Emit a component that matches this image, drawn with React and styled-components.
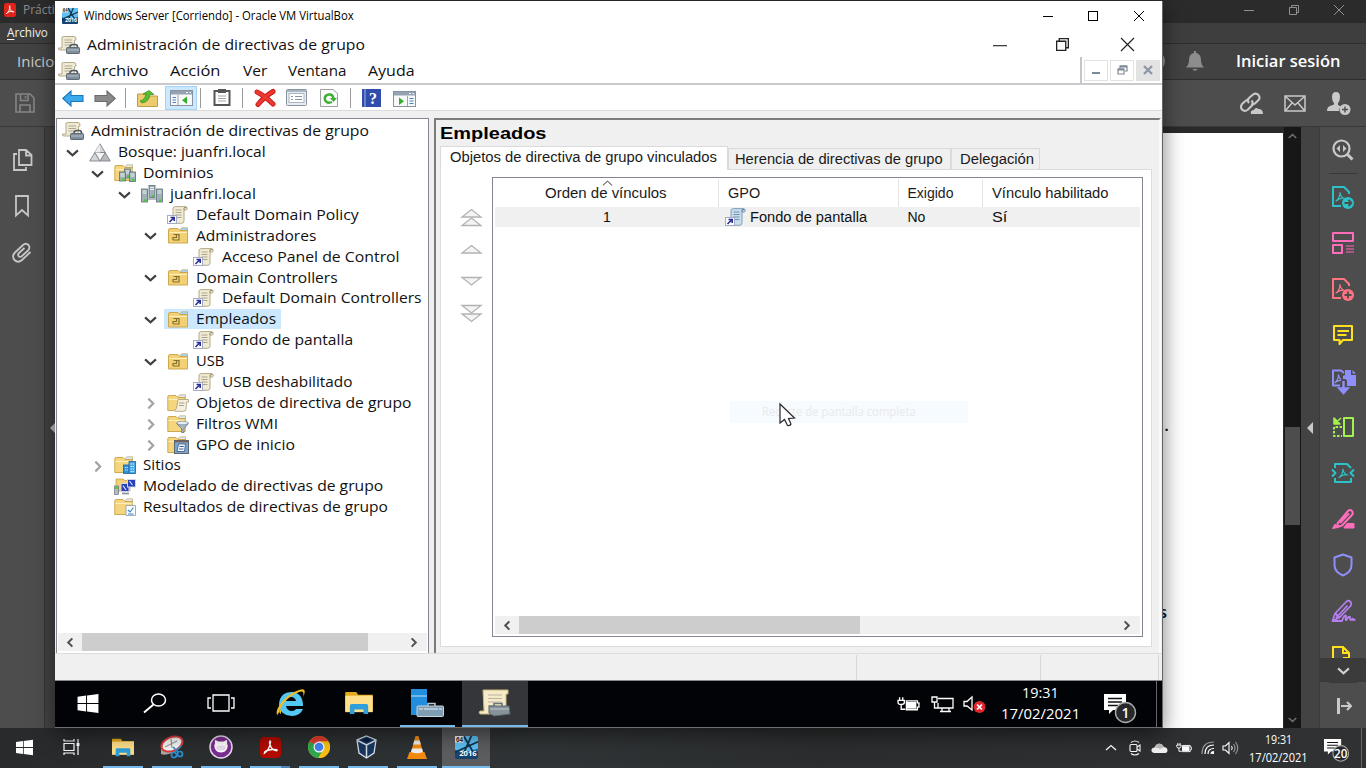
import React, { useLayoutEffect, useRef, useState } from 'react';
import styled, { createGlobalStyle, css } from 'styled-components';

const Global = createGlobalStyle`
  * { box-sizing: border-box; }
  html, body { margin: 0; padding: 0; overflow: hidden; background: #2b2b2b; }
  body { font-family: 'Open Sans', 'Noto Sans', sans-serif; font-size: 12px; }
  svg { display: block; flex: none; overflow: visible; }
`;

const FitBox = styled.span`
  display: inline-block;
  flex: none;
  width: ${(p) => p.$w}px;
  height: ${(p) => p.$lh || 18}px;
  line-height: ${(p) => p.$lh || 18}px;
  font-size: ${(p) => p.$size || 13.6}px;
  color: ${(p) => p.$color || '#111'};
  font-weight: ${(p) => p.$weight || 400};
  white-space: nowrap;
  ${(p) => p.$sans && css`font-family: 'Liberation Sans', Arial, sans-serif;`}
`;
const FitInner = styled.span`
  display: inline-block;
  transform-origin: 0 50%;
`;
function Fit({ w, lh, size, color, weight, sans, children }) {
  const ref = useRef(null);
  const [scale, setScale] = useState(1);
  useLayoutEffect(() => {
    if (ref.current.offsetWidth) setScale(w / ref.current.offsetWidth);
  }, [w, children]);
  return (
    <FitBox $w={w} $lh={lh} $size={size} $color={color} $weight={weight} $sans={sans}>
      <FitInner ref={ref} style={{ transform: `scaleX(${scale})` }}>{children}</FitInner>
    </FitBox>
  );
}

/* ---------- shared pieces ---------- */
const Slot = styled.div`
  flex: none;
  width: ${(p) => p.$w}px;
  height: ${(p) => (p.$h ? p.$h + 'px' : '100%')};
  padding-top: ${(p) => p.$top || 0}px;
  display: flex;
  align-items: center;
  justify-content: center;
`;
const Grow = styled.div`flex: 1;`;

const Minus = ({ s = 10, c = '#000', w = 1 }) => (
  <svg width={s} height={s} viewBox="0 0 10 10"><path d="M0 5.5H10" stroke={c} strokeWidth={w} /></svg>
);
const Cross = ({ s = 10, c = '#000', w = 1 }) => (
  <svg width={s} height={s} viewBox="0 0 10 10"><path d="M0 0L10 10M10 0L0 10" stroke={c} strokeWidth={w} /></svg>
);
const Restore = ({ s = 10, c = '#000', w = 1 }) => (
  <svg width={s} height={s} viewBox="0 0 10 10" fill="none" stroke={c} strokeWidth={w}>
    <path d="M.5 2.5H7.5V9.5H.5ZM2.5 2.5V.5H9.5V7.5H7.5" />
  </svg>
);
const Square = () => (
  <svg width="10" height="10"><rect x=".5" y=".5" width="9" height="9" fill="none" stroke="#000" /></svg>
);
const Chevron = ({ dir = 'down', c = '#404040', s = 12, w = 2 }) => {
  const d = { down: 'M1 4L6 8.5L11 4', up: 'M1 8L6 3.5L11 8', right: 'M4 1.5L8.500 6L4 10.500', left: 'M8 1.500L3.500 6L8 10.500' }[dir];
  return <svg width={s} height={s} viewBox="0 0 12 12"><path d={d} fill="none" stroke={c} strokeWidth={w} /></svg>;
};
const WinLogo = ({ w, h }) => (
  <svg width={w} height={h} viewBox="0 0 22 20" fill="#fff">
    <path d="M0 3L9 1.7V9.5H0ZM10 1.5L22 0V9.5H10ZM0 10.5H9V18.3L0 17ZM10 10.5H22V20L10 18.5Z" />
  </svg>
);

/* ---------- console tree icons ---------- */
const ScrollShape = ({ blue }) => (
  <g>
    <path d="M6 2Q6.500 .6 8.500 .6H18Q20.300 .6 20.300 2.600Q20.300 4.200 18 4.200L17 4V15Q17 17.300 14.500 17.300H6Q4 17.300 4.500 15L6 14Z"
      fill={blue ? '#c9dcea' : '#f1ebd3'} stroke={blue ? '#7897b5' : '#aca180'} strokeWidth=".9" />
    <path d="M8.500 4H14.500M8.500 6.500H14.500M8.500 9H14.500M10 11.500H14.500" stroke={blue ? '#6f93b3' : '#a9a48e'} strokeWidth="1" />
    <path d="M17 4V2Q18 .8 19.500 2" fill="none" stroke={blue ? '#4f6f91' : '#8f8563'} strokeWidth="1" />
  </g>
);
const GpmcIcon = () => (
  <svg width="22" height="18" viewBox="0 0 22 18">
    <path d="M4 1Q5 .5 7 .5H16Q18.500 .5 18 4L16.500 4.500L16 14H2Q0 14 .5 12H4Z" fill="#f1ead3" stroke="#aaa083" strokeWidth=".9" />
    <path d="M6.500 4H14M6.500 6.500H14M6.500 9H12" stroke="#aaa795" />
    <path d="M12 11Q12 8.500 15 8.500H17Q19.500 8.500 19.500 11" fill="none" stroke="#4c5660" strokeWidth="1.600" />
    <rect x="8.500" y="11.500" width="13" height="6" rx=".8" fill="#7e8d99" stroke="#5f6b75" />
    <path d="M9 14H21" stroke="#b8c3cb" />
  </svg>
);
const ForestIcon = () => (
  <svg width="22" height="19" viewBox="0 0 22 19" stroke="#80858a" strokeWidth=".9" fill="#d3d6d8">
    <path d="M11 .8L16.200 9.500H5.800Z" /><path d="M5.800 9.500L11 18H.7Z" /><path d="M16.200 9.500L21.300 18H11Z" fill="#b7babd" />
    <path d="M5.800 9.500H16.200L11 18Z" fill="#f5f5f5" /><path d="M11 .8V9.500L5.800 9.500Z" fill="#eee" stroke="none" />
  </svg>
);
const FolderShape = () => (
  <g>
    <path d="M11 2.500L13 .8H18.500V4H11Z" fill="#dce9f3" stroke="#b39b55" strokeWidth=".6" />
    <path d="M.8 3Q.8 1.500 2 1.500H9L11 3.500H18.200V16.500H.8Z" fill="#f5d67f" stroke="#c8a246" strokeWidth=".9" />
    <path d="M1.500 5.500H17.500" stroke="#fdf0bf" />
  </g>
);
const Server = ({ x, y, h = 10 }) => (
  <g>
    <rect x={x} y={y} width="6" height={h} fill="#9fb0b8" stroke="#5d6d75" strokeWidth=".8" />
    <path d={`M${x + 1} ${y + 2}h4M${x + 1} ${y + 4}h4`} stroke="#e7f0f3" />
    <rect x={x + 2.5} y={y + h - 2.6} width="2.500" height="2" fill="#3fd22d" />
  </g>
);
const DomainsIcon = () => (
  <svg width="22" height="18" viewBox="0 0 22 18"><FolderShape /><Server x={10.5} y={5} h={9} /><Server x={5.5} y={8} h={9} /><Server x={15.5} y={8} h={9.5} /></svg>
);
const DomainIcon = () => (
  <svg width="22" height="18" viewBox="0 0 22 18"><Server x={8} y={.5} h={12} /><Server x={.5} y={4} h={13} /><Server x={15.500} y={4} h={13} /><path d="M7 14H15" stroke="#6b7b83" /></svg>
);
const OuIcon = () => (
  <svg width="22" height="17" viewBox="0 0 22 17">
    <path d="M13 2.500L15 .8H20.500V4H13Z" fill="#a9d3ee" stroke="#b39b55" strokeWidth=".6" />
    <path d="M1.500 3Q1.500 1.500 3 1.500H11L13 3.500H20.500V16H1.500Z" fill="#f3d074" stroke="#c8a246" strokeWidth=".9" />
    <path d="M2.200 5.500H20" stroke="#fdf0bf" /><path d="M6 13H12V7.500H6.500M6 13V10.500H9.500V8" fill="none" stroke="#84702b" strokeWidth="1.200" />
  </svg>
);
const ShortcutArrow = () => (
  <g><rect x=".5" y="9.500" width="9" height="8" fill="#fff" stroke="#a3abc6" /><path d="M2.500 16L7 11.500M3.500 11.500H7.200V15" stroke="#2a2f93" strokeWidth="1.600" fill="none" /></g>
);
const GpoLinkIcon = ({ blue }) => (
  <svg width="22" height="18" viewBox="0 0 22 18"><ScrollShape blue={blue} /><ShortcutArrow /></svg>
);
const FolderScroll = () => (
  <svg width="22" height="18" viewBox="0 0 22 18"><FolderShape /><path d="M11 5.500H21.500V8H19.500L19 15.500Q18.500 17.300 16.500 17.300H8Q6.500 16 9.500 14.500Z" fill="#f6f0dc" stroke="#a69a78" strokeWidth=".8" /><path d="M12 9H17.500M12 11.500H17" stroke="#a9a48e" /></svg>
);
const FolderFilter = () => (
  <svg width="22" height="18" viewBox="0 0 22 18"><FolderShape /><path d="M9.500 8.500H21.500L17 13.500V17.500H14.500V13.500Z" fill="#a8b9c5" stroke="#657784" strokeWidth=".8" /><ellipse cx="15.500" cy="8" rx="5.800" ry="1.800" fill="#e7eef2" stroke="#657784" strokeWidth=".6" /></svg>
);
const FolderStarter = () => (
  <svg width="22" height="18" viewBox="0 0 22 18"><FolderShape /><rect x="7.500" y="4.500" width="14" height="13" fill="#7fa4cf" stroke="#5a6573" /><path d="M8 5.500H21" stroke="#7c5f4d" strokeWidth="1.600" /><path d="M11.500 8H18.500L17.500 15.500H10Z" fill="#f3f7fb" stroke="#34557e" strokeWidth=".8" /><path d="M12.500 10.500H16.800M12 13H16.500" stroke="#38639a" /></svg>
);
const SitesIcon = () => (
  <svg width="22" height="18" viewBox="0 0 22 18"><FolderShape /><rect x="9.500" y="9" width="6" height="8.500" fill="#2f8fd6" stroke="#1763a6" strokeWidth=".8" /><rect x="15" y="5.500" width="6.500" height="12" fill="#48a6e6" stroke="#1763a6" strokeWidth=".8" /><path d="M16.500 8H20M16.500 10.500H20M16.500 13H20M16.500 15.500H20M11 11.500H14M11 14H14" stroke="#d5eefc" strokeWidth="1.200" strokeDasharray="1.400 .7" /></svg>
);
const ModelIcon = () => (
  <svg width="22" height="18" viewBox="0 0 22 18"><path d="M2 2H9L11 3.500H16V14H2Z" fill="#f3d074" stroke="#c8a246" strokeWidth=".8" /><rect x=".6" y="9" width="4" height="8.400" fill="#b7bcc0" stroke="#6d7378" strokeWidth=".7" /><rect x="1.300" y="9.500" width="2.600" height="2.500" fill="#47cc31" /><rect x="7" y="6.500" width="8" height="8" fill="#273fb8" stroke="#d5d9e6" /><path d="M8 16.500H15" stroke="#8e959e" strokeWidth="1.800" /><rect x="13.500" y="2.500" width="8" height="7.500" fill="#273fb8" stroke="#d5d9e6" /><path d="M9 8.500L12 13M15.500 4L18.500 8" stroke="#dce3ff" strokeWidth="1.200" /></svg>
);
const ResultIcon = () => (
  <svg width="22" height="18" viewBox="0 0 22 18"><FolderShape /><path d="M12 7.500H21.500V17.500H12Z" fill="#fbfdff" stroke="#93a3b3" strokeWidth=".9" /><path d="M14 12L16 14L19.500 9.500M14 16H19.500" fill="none" stroke="#3a86c9" strokeWidth="1.100" /></svg>
);

/* ---------- screen and Acrobat window ---------- */
const Screen = styled.div`
  position: relative;
  width: 1366px;
  height: 768px;
  overflow: hidden;
  display: flex;
  flex-direction: column;
  background: #4d4d4d;
`;
const AcroTitle = styled.div`
  height: 23px; flex: none; background: #2b2b2b; display: flex; align-items: center; padding: 0 4px 3px; color: #8b8b8b;
`;
const AcroMenu = styled.div`
  height: 20px; flex: none; background: #3e3e3e; display: flex; align-items: center; padding-left: 7px; color: #f3f3f3;
  u { text-underline-offset: 2px; }
`;
const AcroTabs = styled.div`
  height: 37px; flex: none; background: #424242; border-top: 1px solid #2e2e2e; border-bottom: 1px solid #2e2e2e;
  display: flex; align-items: center; padding: 0 0 1px 17px;
`;
const AcroTools = styled.div`
  height: 47px; flex: none; background: #4d4d4d; border-bottom: 1px solid #383838; display: flex; align-items: center; padding-left: 2px;
`;
const AcroBody = styled.div`height: 601px; flex: none; display: flex;`;
const LeftRail = styled.div`
  width: 45px; flex: none; background: #4d4d4d; border-right: 1px solid #363636; padding: 10px 0 0; display: flex; flex-direction: column;
`;
const Gutter = styled.div`
  width: ${(p) => p.$w}px; flex: none; background: #434343; display: flex; align-items: center; justify-content: ${(p) => (p.$end ? 'flex-end' : 'center')};
`;
const DocArea = styled.div`flex: 1; background: #2a2a2a; padding: 6px 1px 0 0; display: flex;`;
const DocPage = styled.div`
  flex: 1; background: #fff; font-size: 17px; font-weight: 600; display: flex; flex-direction: column; align-items: flex-end;
`;
const DocLine = styled.div`
  height: ${(p) => p.$h}px; line-height: 22px; padding-top: ${(p) => p.$top}px; padding-right: ${(p) => p.$r}px; color: #000c20;
`;
const VScroll = styled.div`
  width: 17px; flex: none; background: #171717; display: flex; flex-direction: column; align-items: center; padding: 5px 0 2px;
`;
const VThumb = styled.div`width: 15px; height: 98px; background: #4d4d4d;`;
const VTrack = styled.div`height: ${(p) => p.$h}px;`;
const RightRail = styled.div`
  width: 47px; flex: none; background: #4d4d4d; border-left: 1px solid #3a3a3a; display: flex; flex-direction: column; align-items: center;
`;
const RailItem = styled.div`
  height: ${(p) => p.$h || 46}px; flex: none; display: flex; align-items: ${(p) => (p.$top ? 'flex-start' : 'center')}; justify-content: center; overflow: hidden;
`;
const RailRule = styled.div`width: 28px; height: 1px; flex: none; background: #383838;`;
const RailMore = styled.div`
  width: 100%; height: 24px; flex: none; background: #3b3b3b; display: flex; align-items: center; justify-content: center;
`;

const AcroLogo = ({ w = 12, h = 14, bg = '#e0241b' }) => (
  <svg width={w} height={h} viewBox="0 0 24 26" preserveAspectRatio="none"><rect width="24" height="26" rx="5" fill={bg} /><path d="M5 20C8 18 12 12 12 6C12 4 10.500 5 11 8C12 13 15 17 19 17C21 16 18 15 14 15.500C9 16 5 18 5 20Z" fill="none" stroke="#fff" strokeWidth="1.700" /></svg>
);
const PdfTri = ({ x = 0, y = 0 }) => (
  <path transform={`translate(${x} ${y})`} d="M1 10C3 8.500 5 5 5 1.500C5 4.500 7.500 7.500 10 7.500C6.500 6.500 3.500 8 1 10Z" fill="none" strokeWidth="1.200" />
);
const stroke2 = { fill: 'none', strokeWidth: 2, strokeLinejoin: 'round' };
const ExportPdf = ({ c, plus }) => (
  <svg width="24" height="24" viewBox="0 0 24 24" stroke={c} {...stroke2}>
    <path d="M10 21H2V2H13L18 7V9" /><PdfTri x={4} y={6} />
    <circle cx="17" cy="18" r="6" fill={c} stroke="none" />
    <path d={plus ? 'M17 14.500V21.500M13.500 18H20.500' : 'M13.500 18H20M17.500 15L20.500 18L17.500 21'} stroke="#4d4d4d" strokeWidth="1.800" />
  </svg>
);
const RAIL_ICONS = [
  <ExportPdf key="export" c="#2dc1c9" />,
  <svg key="organize" width="24" height="24" viewBox="0 0 24 24" stroke="#ff6dbb" {...stroke2}><rect x="2" y="2" width="20" height="8" /><rect x="2" y="14" width="9" height="8" /><path d="M15 15H23M15 18H23M15 21H23" strokeWidth="1.200" /></svg>,
  <ExportPdf key="create" c="#ff7480" plus />,
  <svg key="comment" width="22" height="22" viewBox="0 0 22 22" stroke="#ffe11f" {...stroke2}><path d="M2 2H20V16H11L7.500 20V16H2Z" /><path d="M5.500 7H17M5.500 11H14.500" /></svg>,
  <svg key="combine" width="25" height="25" viewBox="0 0 25 25"><path d="M9 16.500H2V1.500H10L13 4" stroke="#8f8ffc" {...stroke2} /><g stroke="#8f8ffc"><PdfTri x={2.500} y={4} /></g><path d="M14 1H20V6H25V17H16V11H12V7L14 6ZM21.500 1L25 4.500H21.500Z" fill="#8f8ffc" /><path d="M12.500 10V18" stroke="#4d4d4d" strokeWidth="5" /><path d="M12.500 12V20M8.500 19.500L12.500 24L16.500 19.500Z" stroke="#8f8ffc" strokeWidth="2.400" fill="#8f8ffc" /></svg>,
  <svg key="compare" width="22" height="22" viewBox="0 0 22 22" stroke="#a4f24d" {...stroke2}><rect x="12" y="2" width="9" height="18" /><path d="M10 11H2V20H10" strokeDasharray="2.500 1.500" /><path d="M9 2L4 6.500M2 2V8H8Z" fill="#a4f24d" strokeWidth="1.500" /></svg>,
  <svg key="compress" width="24" height="22" viewBox="0 0 24 22" stroke="#2dc1c9" {...stroke2}><path d="M4 6V2H16L20 6M4 16V20H20V16" /><path d="M1 7.500L4.500 11L1 14.500M23 7.500L19.500 11L23 14.500" /><PdfTri x={7} y={5.500} /></svg>,
  <svg key="redact" width="23" height="22" viewBox="0 0 23 22" stroke="#ff6dbb" {...stroke2}><path d="M5.500 15.500L16 3Q18 1 20 3Q21.500 5 20 7L10 17.500L5.500 19ZM8 15L17 5.500" /><path d="M.5 20.500L3 16L6 19.500ZM12 19.500L15 15.500H22V20H12Z" fill="#ff6dbb" strokeWidth="1" /></svg>,
  <svg key="protect" width="20" height="24" viewBox="0 0 20 24" stroke="#8f8ffc" {...stroke2}><path d="M10 1.500L18.500 4.500V12Q18.500 19 10 22.500Q1.500 19 1.500 12V4.500Z" /></svg>,
  <svg key="sign" width="25" height="24" viewBox="0 0 25 24" stroke="#b57ff0" {...stroke2}><path d="M1.500 22L4 14.500L15.500 2.500Q18 .5 20 3.500Q21 5 19.500 7L8.500 18.500L1.500 22H11Q13 16 15 16.500Q14 22 15.500 21Q17.500 16.500 19 18Q18.500 22 21 20.500Q21.500 18.500 22 21L24.500 20.500M4.500 14.500L8 18M5 19L16.500 6.500" strokeWidth="1.800" /></svg>,
];

function AcrobatWindow() {
  return (
    <>
      <AcroTitle>
        <AcroLogo w={12} h={14} />
        <Slot $w={7} />
        <Fit w={32} size={12} color="#8b8b8b">Prácti</Fit>
        <Grow />
        <Slot $w={45}><Minus c="#909090" /></Slot>
        <Slot $w={45}><Restore c="#909090" /></Slot>
        <Slot $w={46}><Cross c="#909090" /></Slot>
      </AcroTitle>
      <AcroMenu><Fit w={41} size={12} color="#f5f5f5"><u>A</u>rchivo</Fit></AcroMenu>
      <AcroTabs>
        <Fit w={37} size={15} lh={22} color="#c9c9c9">Inicio</Fit>
        <Grow />
        <Slot $w={30}><svg width="20" height="20"><circle cx="10" cy="10" r="9" fill="none" stroke="#999" strokeWidth="2" /></svg></Slot>
        <Slot $w={50}>
          <svg width="18" height="20" viewBox="0 0 18 20" fill="#8d8d8d"><path d="M8 0H10V2Q15 3 15 9Q15 14 18 16.500H0Q3 14 3 9Q3 3 8 2ZM6 18H12L9 20Z" /></svg>
        </Slot>
        <Slot $w={16} />
        <Fit w={104} size={16} lh={22} color="#fff" weight={600}>Iniciar sesión</Fit>
        <Slot $w={26} />
      </AcroTabs>
      <AcroTools>
        <Slot $w={46}>
          <svg width="20" height="20" viewBox="0 0 20 20" fill="none" stroke="#858585" strokeWidth="1.600"><path d="M1 1H15L19 5V19H1ZM5.500 1V7.500H13V1M5 19V12H15V19M10.500 3V5.500" /></svg>
        </Slot>
        <Grow />
        <Slot $w={44}>
          <svg width="25" height="23" viewBox="0 0 25 23" fill="none" stroke="#c9c9c9" strokeWidth="2.100"><path d="M10 11Q7.500 8.500 10 6L14 2.500Q17 .5 19.500 3Q21.500 6 19.500 8L16 11.500Q14 13 12 12.500M12.500 8.500Q15 11.500 12.500 14L8.500 18Q5.500 20 3 17.500Q1 15 3 12L7 8.500Q8.500 7.500 10 8" /><path d="M12 22Q11 18 15 18Q16.500 14.500 19.500 17Q24 17 24 22Z" fill="#c9c9c9" stroke="none" /></svg>
        </Slot>
        <Slot $w={44}>
          <svg width="22" height="17" viewBox="0 0 22 17" fill="none" stroke="#c9c9c9" strokeWidth="1.500"><path d="M1 1H21V16H1ZM2 2L11 10L20 2M2 15L8 8M20 15L14 8" /></svg>
        </Slot>
        <Slot $w={44}>
          <svg width="24" height="23" viewBox="0 0 24 23" fill="#c9c9c9"><path d="M5 5Q5 0 9 0T13 5Q13 9 11 11V13L14 14.500Q11.500 16.500 12 19H0Q0 15 3 14L7 12.500V11Q5 9 5 5Z" /><circle cx="18" cy="17.500" r="5.500" /><path d="M18 14.500V20.500M15 17.500H21" stroke="#4d4d4d" strokeWidth="1.400" /></svg>
        </Slot>
        <Slot $w={5} />
      </AcroTools>
      <AcroBody>
        <LeftRail>
          <Slot $w={45} $h={46}><svg width="20" height="22" viewBox="0 0 20 22" fill="none" stroke="#c6c6c6" strokeWidth="1.800"><path d="M6 1H13L18.500 6V16H6ZM13 1V6.500H18.500M4 5H1V21H13V18" /></svg></Slot>
          <Slot $w={43} $h={46}><svg width="14" height="22" viewBox="0 0 14 22" fill="none" stroke="#c6c6c6" strokeWidth="1.800"><path d="M1 1H13V20.500L7 15L1 20.500Z" /></svg></Slot>
          <Slot $w={43} $h={46}><svg width="20" height="21" viewBox="0 0 20 21" fill="none" stroke="#c6c6c6" strokeWidth="1.800"><path d="M18.500 10L10 18Q6 21.500 2.500 18Q-.5 14 3 10.500L11 3Q14 .5 16.500 3Q18.500 6 16 8.500L9.500 14.500Q7.500 15.500 6.500 14Q5.500 12.500 7 11L12.500 6" /></svg></Slot>
        </LeftRail>
        <Gutter $w={10} $end><svg width="5" height="10"><path d="M5 0V10L0 5Z" fill="#bbb" /></svg></Gutter>
        <DocArea>
          <DocPage>
            <DocLine $top={281} $h={466} $r={114}>.</DocLine>
            <DocLine $top={2} $h={30} $r={116}>s</DocLine>
          </DocPage>
        </DocArea>
        <VScroll>
          <Chevron dir="up" c="#6e6e6e" s={9} w={2} />
          <VTrack $h={286} />
          <VThumb />
          <VTrack $h={190} />
          <Chevron c="#6e6e6e" s={9} w={2} />
        </VScroll>
        <Gutter $w={18}><svg width="6" height="12"><path d="M6 0V12L0 6Z" fill="#c9c9c9" /></svg></Gutter>
        <RightRail>
          <RailItem>
            <svg width="22" height="22" viewBox="0 0 22 22" fill="none" stroke="#c9c9c9" strokeWidth="2.200"><circle cx="9.500" cy="9.500" r="8" /><path d="M15 15L20.500 20.500" strokeWidth="3" /><path d="M8 6L4.500 9.500L8 13ZM11 6L14.500 9.500L11 13Z" fill="#c9c9c9" stroke="none" /></svg>
          </RailItem>
          <RailRule />
          {RAIL_ICONS.map((icon, i) => <RailItem key={i}>{icon}</RailItem>)}
          <RailItem $h={24} $top>
            <svg width="22" height="34" viewBox="0 -12 22 34" fill="none" stroke="#ffe11f" strokeWidth="2"><path d="M9 14H1V1H11L17 7V12H11M11 1V7H17" /></svg>
          </RailItem>
          <RailMore><Chevron c="#d0d0d0" s={13} w={2} /></RailMore>
          <RailRule />
          <RailItem $h={46}>
            <svg width="18" height="16" viewBox="0 0 18 16" fill="none" stroke="#c9c9c9" strokeWidth="2"><path d="M4.500 0V16" strokeWidth="3" /><path d="M7 8H17M13 4L17 8L13 12" /></svg>
          </RailItem>
        </RightRail>
      </AcroBody>
    </>
  );
}

/* ---------- VirtualBox window ---------- */
const VmWindow = styled.section`
  position: absolute;
  left: 55px;
  top: 1px;
  width: 1108px;
  height: 727px;
  background: #fff;
  border-right: 1px solid #656565;
  border-bottom: 1px solid #6d6d6d;
  box-shadow: 0 6px 20px rgba(0, 0, 0, 0.5);
  display: flex;
  flex-direction: column;
`;
const VmTitle = styled.header`height: 30px; flex: none; display: flex; align-items: center; padding-left: 7px;`;
const MmcTitle = styled.div`height: 26px; flex: none; display: flex; align-items: center; padding: 1px 0 0 3px;`;
const MmcMenu = styled.div`height: 28px; flex: none; display: flex; align-items: flex-start; padding-left: 3px; border-bottom: 2px solid #c9cace;`;
const MenuSlot = styled.div`flex: none; display: flex; align-items: center; height: 27px; margin-right: ${(p) => p.$gap}px;`;
const MdiGroup = styled.div`
  height: 26px; width: 82px; border-left: 2px solid #c3c5ca; display: flex; align-items: center; gap: 2px; padding-left: 2px;
`;
const MdiButton = styled.div`
  width: 24px; height: 21px; flex: none; border: 1px solid #e2e2e2; background: ${(p) => (p.$shade ? '#e3e3e3' : '#fff')};
  display: flex; align-items: center; justify-content: center;
`;
const MmcTools = styled.div`
  height: 25px; flex: none; display: flex; align-items: center; padding-left: 2px;
`;
const ToolActive = styled.div`
  width: 32px; height: 24px; background: #cce8ff; border: 1px solid #a5d3f5; display: flex; align-items: center; justify-content: center;
`;
const ToolSep = styled.div`width: 1px; height: 20px; background: #9a9a9a;`;
const MmcBody = styled.div`
  height: 543px; flex: none; background: #f0f0f0; border-top: 1px solid #dcdcdc; padding: 7px 1px 0 1px; display: flex; gap: 5px;
`;
const TreePane = styled.div`
  width: 373px; height: 536px; flex: none; background: #fff; border: 1px solid #828790; display: flex; flex-direction: column; padding: 2px 0 0;
`;
const TreeList = styled.div`flex: 1; overflow: hidden;`;
const TreeRow = styled.div`
  height: 20.88px; display: flex; align-items: center; padding-left: ${(p) => (p.$level ? 26.35 * p.$level - 27.3 : 5)}px;
`;
const Twisty = styled.div`width: 32px; flex: none; display: flex; justify-content: center; padding: ${(p) => (p.$right ? 2 : 0)}px 1px 0 0;`;
const TreeLabel = styled.div`
  display: flex; align-items: center; gap: 7px; height: 20px; padding: 0 5px 0 3px; margin-left: -3px;
  background: ${(p) => (p.$on ? '#cce8ff' : 'transparent')};
`;
const HScroll = styled.div`
  height: 18px; flex: none; background: #f0f0f0; display: flex; align-items: center;
  margin: ${(p) => p.$m}; padding: 0 8px 0 ${(p) => p.$pl}px;
`;
const HThumb = styled.div`height: 18px; width: ${(p) => p.$w}px; background: #cdcdcd; margin: 0 auto 0 6px;`;

const DetailPane = styled.div`
  width: 727px; height: 536px; flex: none; background: #f0f0f0; border-left: 2px solid #7c7c7c; border-top: 2px solid #7c7c7c;
  border-right: 2px solid #fafafa; border-bottom: 1px solid #fafafa; padding: 3px 7px 6px 4px; display: flex; flex-direction: column;
`;
const DetailTitle = styled.div`height: 22px; flex: none; display: flex; align-items: center; padding-bottom: 1px;`;
const TabStrip = styled.div`height: 24px; flex: none; display: flex; align-items: flex-end;`;
const Tab = styled.div`
  width: ${(p) => p.$w}px; height: ${(p) => (p.$on ? 24 : 21)}px; flex: none; display: flex; align-items: center;
  padding: 0 0 ${(p) => (p.$on ? 3 : 0)}px ${(p) => p.$pl}px;
  background: ${(p) => (p.$on ? '#fff' : '#f0f0f0')}; border: 1px solid #dadada; border-bottom: 0;
  ${(p) => p.$on && css`margin-bottom: -1px; z-index: 1;`}
`;
const TabPage = styled.div`
  flex: 1; background: #fff; border: 1px solid #dcdcdc; padding: 7px 8px 9px 6px; display: flex; gap: 0;
`;
const OrderButtons = styled.div`width: 45px; flex: none; display: flex; flex-direction: column; align-items: center; padding: 25px 0 0 4px;`;
const OrderButton = styled.div`height: 32px; display: flex; align-items: center;`;
const ListView = styled.div`
  flex: 1; border: 1px solid #828790; display: flex; flex-direction: column; padding: 1px 1px 2px 1px;
`;
const ListHeader = styled.div`height: 28px; flex: none; display: flex;`;
const HeadCell = styled.div`
  position: relative; width: ${(p) => p.$w}px; flex: none; border-right: ${(p) => (p.$last ? 0 : '1px solid #e3e3e3')};
  display: flex; align-items: center; justify-content: ${(p) => (p.$center ? 'center' : 'flex-start')}; padding-left: ${(p) => (p.$center ? 0 : 8.5)}px;
`;
const SortMark = styled.div`position: absolute; top: -1px; left: 108px;`;
const ListRow = styled.div`height: 20px; flex: none; background: #f0f0f0; display: flex; margin: 0 1px;`;
const Cell = styled.div`
  width: ${(p) => p.$w}px; flex: none; display: flex; align-items: center; gap: 3px;
  justify-content: ${(p) => (p.$center ? 'center' : 'flex-start')}; padding-left: ${(p) => p.$pad || 0}px;
`;
const StatusBar = styled.div`
  height: 27px; flex: none; background: #f0f0f0; border-top: 1px solid #dcdcdc; display: flex; justify-content: flex-end; padding: 1px 1px 0;
`;
const StatusCell = styled.div`width: ${(p) => p.$w}px; border-left: 1px solid #d8d8d8;`;
const GuestBar = styled.div`
  height: 47px; flex: none; background: #020306; border-top: 1px solid #888; display: flex; align-items: stretch;
`;
const GuestApp = styled.div`
  width: ${(p) => p.$w}px; flex: none; display: flex; align-items: center; justify-content: center;
  background: ${(p) => (p.$on ? '#34363a' : 'transparent')};
  border-bottom: ${(p) => (p.$run ? '2px solid #76b9ed' : '2px solid transparent')};
  margin-right: ${(p) => p.$gap || 0}px;
`;
const Clock = styled.div`
  width: ${(p) => p.$w}px; flex: none; display: flex; flex-direction: column; align-items: center; justify-content: center; padding-bottom: ${(p) => p.$pb || 0}px;
`;
const ShowDesktop = styled.div`width: ${(p) => p.$w}px; border-left: 1px solid #666;`;

const TREE = [
  [0, '', <GpmcIcon />, 'Administración de directivas de grupo', 278],
  [1, 'down', <ForestIcon />, 'Bosque: juanfri.local', 148],
  [2, 'down', <DomainsIcon />, 'Dominios', 70],
  [3, 'down', <DomainIcon />, 'juanfri.local', 86],
  [4, '', <GpoLinkIcon />, 'Default Domain Policy', 163],
  [4, 'down', <OuIcon />, 'Administradores', 120],
  [5, '', <GpoLinkIcon />, 'Acceso Panel de Control', 178],
  [4, 'down', <OuIcon />, 'Domain Controllers', 142],
  [5, '', <GpoLinkIcon />, 'Default Domain Controllers', 199],
  [4, 'down', <OuIcon />, 'Empleados', 80, true],
  [5, '', <GpoLinkIcon />, 'Fondo de pantalla', 131],
  [4, 'down', <OuIcon />, 'USB', 28],
  [5, '', <GpoLinkIcon />, 'USB deshabilitado', 131],
  [4, 'right', <FolderScroll />, 'Objetos de directiva de grupo', 215],
  [4, 'right', <FolderFilter />, 'Filtros WMI', 82],
  [4, 'right', <FolderStarter />, 'GPO de inicio', 99],
  [2, 'right', <SitesIcon />, 'Sitios', 38],
  [2, '', <ModelIcon />, 'Modelado de directivas de grupo', 240],
  [2, '', <ResultIcon />, 'Resultados de directivas de grupo', 245],
];

const Tri = ({ up, double }) => {
  const one = (y) => <path d={up ? `M1 ${y + 7.5}H20L10.500 ${y}Z` : `M1 ${y}H20L10.500 ${y + 7.5}Z`} />;
  return (
    <svg width="21" height={double ? 18 : 10} viewBox={`0 -.5 21 ${double ? 18 : 10}`} fill="#f4f4f4" stroke="#b2b2b2" strokeWidth="1.300">
      {one(0)}{double && one(8.500)}
    </svg>
  );
};
const ArrowIcon = ({ c, edge, flip }) => (
  <svg width="22" height="17" viewBox="0 0 22 17">
    <path transform={flip ? 'matrix(-1 0 0 1 22 0)' : undefined} d="M.8 8.500L9 1V5.500H21V11.500H9V16Z" fill={c} stroke={edge} strokeWidth="1.100" />
  </svg>
);
const ConsolePanel = ({ left, play }) => (
  <svg width="23" height="16" viewBox="0 0 23 16">
    <rect x=".5" y=".5" width="22" height="15" fill="#f7f8f9" stroke="#8793a0" /><rect x="1" y="1" width="21" height="3.500" fill="#94a2b1" />
    <path d="M16 2.500H18M19.500 2.500H21" stroke="#fff" />
    <path d={left ? 'M8 5V15' : 'M14.500 5V15'} stroke="#9aa4ae" />
    <path d={left ? 'M2.500 7.500H6M2.500 10H6M2.500 12.500H6' : 'M16.500 7.500H20.500M16.500 10H20.500M16.500 12.500H20.500'} stroke="#4e84bd" strokeWidth="1.200" />
    <path d={play ? 'M6 6.500V14L11 10.200Z' : 'M17 6.500V14L12 10.200Z'} fill="#31ae2a" />
  </svg>
);
const Os2016 = ({ s }) => (
  <svg width={s} height={s} viewBox="0 0 24 24">
    <rect width="24" height="24" rx="2" fill="#1d6cb3" /><path d="M9 0H22Q24 0 24 2V13L9 18L0 14V7H9Z" fill="#5dc1f2" />
    <path d="M0 17L24 6M9 0L21 20M17 0L10 16" stroke="#15324f" strokeWidth="1.900" /><path d="M0 16H24V22Q24 24 22 24H2Q0 24 0 22Z" fill="#152e4d" opacity=".65" />
    <rect width="9" height="7" fill="#f3f3f3" /><text x="1" y="6" fontSize="6.500" fontWeight="700" fill="#333" fontFamily="Open Sans">64</text>
    <text x="4.500" y="20.500" fontSize="8" fontWeight="700" fill="#fff" fontFamily="Open Sans" textLength="18">2016</text>
  </svg>
);
const FolderApp = ({ w, h }) => (
  <svg width={w} height={h} viewBox="0 0 30 24"><path d="M0 1Q0 0 1 0H12L14 3H30V21H0Z" fill="#e5a91c" /><rect y="4" width="30" height="18" fill="#ffe08a" /><path d="M5 24V15Q5 13 7 13H23Q25 13 25 15V24H20V19H10V24Z" fill="#2f9fdc" /></svg>
);
const PlugBattery = ({ w = 22, h = 14 }) => (
  <svg width={w} height={h} viewBox="0 0 22 14" fill="none" stroke="#fff" strokeWidth="1.300"><path d="M1 3H7V5Q7 7 4 7Q1 7 1 5ZM2.500 0V3M5.500 0V3M4 7V11.500H8" /><path d="M9 3.500H19.500V5.500H21V9.500H19.500V12H9Z" /><rect x="9" y="4.500" width="9.500" height="6.500" fill="#fff" stroke="none" /></svg>
);
const Notice = ({ s = 1, n, light, fs }) => (
  <svg width={33 * s} height={29 * s} viewBox="0 0 33 29">
    <path d="M0 0H22V16H9L5 20V16H0Z" fill="#fff" /><path d="M4 4.500H18M4 8H18M4 11.500H14" stroke="#111" strokeWidth="1.500" />
    <circle cx="21.500" cy="18.500" r="10" fill="#26282a" stroke={light} strokeWidth="1.400" />
    <text x="21.500" y={18.500 + fs * .36} textAnchor="middle" fontSize={fs} fontWeight="600" fill="#fff" fontFamily="Open Sans">{n}</text>
  </svg>
);
const GhostMenu = styled.div`
  position: absolute; left: 675px; top: 400px; width: 238px; height: 22px; background: #f5fbfe; display: flex; align-items: center; padding-left: 32px;
`;
const Pointer = styled.div`position: absolute; left: 724px; top: 402px;`;

function Snapin() {
  return (
    <MmcBody>
      <TreePane>
        <TreeList>
          {TREE.map(([level, open, icon, text, w, on]) => (
            <TreeRow key={text} $level={level}>
              {level > 0 && <Twisty $right={open === 'right'}>{open && <Chevron dir={open} s={13} c={open === 'down' ? '#404040' : '#a3a3a3'} />}</Twisty>}
              <TreeLabel $on={on}>{icon}<Fit w={w}>{text}</Fit></TreeLabel>
            </TreeRow>
          ))}
        </TreeList>
        <HScroll $m="0 1px 2px" $pl={7}><Chevron dir="left" c="#505050" s={11} w={2.200} /><HThumb $w={286} /><Chevron dir="right" c="#505050" s={11} w={2.200} /></HScroll>
      </TreePane>
      <DetailPane>
        <DetailTitle><Fit w={106} size={16} weight={700} color="#000" sans>Empleados</Fit></DetailTitle>
        <TabStrip>
          <Tab $w={288} $pl={9} $on><Fit w={267} size={14} color="#1a1a1a" sans>Objetos de directiva de grupo vinculados</Fit></Tab>
          <Tab $w={223} $pl={6}><Fit w={208} size={14} color="#1a1a1a" sans>Herencia de directivas de grupo</Fit></Tab>
          <Tab $w={89} $pl={8}><Fit w={74} size={14} color="#1a1a1a" sans>Delegación</Fit></Tab>
        </TabStrip>
        <TabPage>
          <OrderButtons>
            <OrderButton><Tri up double /></OrderButton>
            <OrderButton><Tri up /></OrderButton>
            <OrderButton><Tri /></OrderButton>
            <OrderButton><Tri double /></OrderButton>
          </OrderButtons>
          <ListView>
            <ListHeader>
              <HeadCell $w={225} $center>
                <SortMark><Chevron dir="up" c="#666" s={11} w={1.200} /></SortMark>
                <Fit w={122} size={14} color="#1a1a1a" sans>Orden de vínculos</Fit>
              </HeadCell>
              <HeadCell $w={180}><Fit w={32} size={14} color="#1a1a1a" sans>GPO</Fit></HeadCell>
              <HeadCell $w={84}><Fit w={46} size={14} color="#1a1a1a" sans>Exigido</Fit></HeadCell>
              <HeadCell $w={157} $last><Fit w={117} size={14} color="#1a1a1a" sans>Vínculo habilitado</Fit></HeadCell>
            </ListHeader>
            <ListRow>
              <Cell $w={224} $center><Fit w={8} size={14} sans>1</Fit></Cell>
              <Cell $w={180} $pad={5.500}><GpoLinkIcon blue /><Fit w={117} size={14} sans>Fondo de pantalla</Fit></Cell>
              <Cell $w={84} $pad={8.500}><Fit w={18} size={14} sans>No</Fit></Cell>
              <Cell $w={150} $pad={8.500}><Fit w={15} size={14} sans>Sí</Fit></Cell>
            </ListRow>
            <Grow />
            <HScroll $m="0 1px" $pl={7}><Chevron dir="left" c="#505050" s={11} w={2.200} /><HThumb $w={341} /><Chevron dir="right" c="#505050" s={11} w={2.200} /></HScroll>
          </ListView>
        </TabPage>
      </DetailPane>
    </MmcBody>
  );
}

function GuestTaskbar() {
  return (
    <GuestBar>
      <GuestApp $w={66}><WinLogo w={22} h={19} /></GuestApp>
      <GuestApp $w={67}><svg width="24" height="20" viewBox="0 0 24 20" fill="none" stroke="#fff" strokeWidth="1.500"><ellipse cx="15.500" cy="7" rx="7" ry="6" /><path d="M10.500 11.500L1 19.500" strokeWidth="1.900" /></svg></GuestApp>
      <GuestApp $w={66}><svg width="28" height="18" viewBox="0 0 28 18" fill="none" stroke="#fff" strokeWidth="1.300"><path d="M6 1H22V17H6ZM4 4H1V14H4M24 4H27V14H24" /></svg></GuestApp>
      <GuestApp $w={74}>
        <svg width="32" height="28" viewBox="0 0 32 28"><path d="M28 17H11Q12 22 17 22Q20 22 21 20H28Q25 27 17 27Q4 26 4 15Q5 3 17 3Q28 4 28 17ZM11 12H21Q20 8 16 8Q12 8 11 12Z" fill="#54c8f4" /><path d="M6 20Q1 28 3 26Q-1 24 6 14Q14 4 24 1Q33 -2 28 8Q30 1 24 3Q14 7 8 15Q2 24 6 25Z" fill="#f2bd24" /></svg>
      </GuestApp>
      <GuestApp $w={61} $gap={11}><FolderApp w={30} h={22} /></GuestApp>
      <GuestApp $w={55} $gap={7} $run>
        <svg width="33" height="28" viewBox="0 0 33 28"><path d="M0 0H16V26H0Z" fill="#218ede" /><path d="M0 7H16" stroke="#bfe3fa" /><path d="M17 17V14.500H24V17" fill="none" stroke="#b8c7d2" strokeWidth="1.500" /><rect x="6" y="17" width="26.500" height="10.500" rx="1" fill="#7f9db3" stroke="#c7d5de" /><path d="M8 20H12M13 20H27M28 20H31" stroke="#e8f0f4" /></svg>
      </GuestApp>
      <GuestApp $w={66} $run $on>
        <svg width="33" height="28" viewBox="0 0 33 28"><path d="M4 1H29V5H27V25H2Q-1 25 1 22H5Z" fill="#f5ebc9" stroke="#c9b67a" /><path d="M9 6H23M9 9.500H23M9 13H23M9 16.500H16" stroke="#b9b39c" /><path d="M15 17V14.500H23V17" fill="none" stroke="#68737c" strokeWidth="1.600" /><path d="M10 17H30L31 25L15 27L10 24Z" fill="#87939b" stroke="#5b666e" /><path d="M11 20H30" stroke="#bbc5cb" /></svg>
      </GuestApp>
      <Grow />
      <Slot $w={36}><PlugBattery w={23} h={15} /></Slot>
      <Slot $w={32}><svg width="23" height="17" viewBox="0 0 23 17" fill="none" stroke="#fff" strokeWidth="1.300"><path d="M7 2.500H22V12H7V7M11 12V15.500M18 12V15.500M9 15.500H20M1 1H6V6H1ZM3.500 6V12H7" /></svg></Slot>
      <Slot $w={32}><svg width="23" height="17" viewBox="0 0 23 17"><path d="M1 5.500H4L9 1V14L4 10H1Z" fill="none" stroke="#fff" strokeWidth="1.300" /><circle cx="16.500" cy="11" r="6" fill="#e1262d" /><path d="M14 8.500L19 13.500M19 8.500L14 13.500" stroke="#fff" strokeWidth="1.700" /></svg></Slot>
      <Slot $w={6} />
      <Clock $w={88} $pb={3}><Fit w={37} size={13.600} lh={21} color="#fff">19:31</Fit><Fit w={79} size={13.600} lh={21} color="#fff">17/02/2021</Fit></Clock>
      <Slot $w={72} $top={8}><Notice n="1" light="#aaa" fs={14} /></Slot>
      <ShowDesktop $w={6} />
    </GuestBar>
  );
}

function VirtualMachine() {
  return (
    <VmWindow>
      <VmTitle>
        <Os2016 s={16} />
        <Slot $w={6} />
        <Fit w={270} size={12} color="#000">Windows Server [Corriendo] - Oracle VM VirtualBox</Fit>
        <Grow />
        <Slot $w={45}><Minus /></Slot>
        <Slot $w={46}><Square /></Slot>
        <Slot $w={46}><Cross /></Slot>
      </VmTitle>
      <MmcTitle>
        <GpmcIcon />
        <Slot $w={7} />
        <Fit w={278}>Administración de directivas de grupo</Fit>
        <Grow />
        <Slot $w={62}><Minus s={14} w={.8} c="#222" /></Slot>
        <Slot $w={62}><Restore s={13} c="#222" /></Slot>
        <Slot $w={69}><Cross s={13} w={.9} c="#222" /></Slot>
      </MmcTitle>
      <MmcMenu>
        <MenuSlot $gap={11}><GpmcIcon /></MenuSlot>
        <MenuSlot $gap={22}><Fit w={57}>Archivo</Fit></MenuSlot>
        <MenuSlot $gap={22}><Fit w={51}>Acción</Fit></MenuSlot>
        <MenuSlot $gap={21}><Fit w={24}>Ver</Fit></MenuSlot>
        <MenuSlot $gap={22}><Fit w={58}>Ventana</Fit></MenuSlot>
        <MenuSlot $gap={0}><Fit w={47}>Ayuda</Fit></MenuSlot>
        <Grow />
        <MdiGroup>
          <MdiButton><svg width="8" height="10"><path d="M0 8H8" stroke="#7b8896" strokeWidth="2" /></svg></MdiButton>
          <MdiButton><svg width="11" height="10" viewBox="0 0 11 10" fill="none" stroke="#7b8896" strokeWidth="1.200"><path d="M1 4H7V9H1ZM3 3V1H10V6H8" /><path d="M1 4.500H7M3 1.500H10" strokeWidth="2" /></svg></MdiButton>
          <MdiButton $shade><Cross s={8} c="#8c98a4" w={3} /></MdiButton>
        </MdiGroup>
      </MmcMenu>
      <MmcTools>
        <Slot $w={32} $top={1}><ArrowIcon c="#39a9ec" edge="#1c77bb" /></Slot>
        <Slot $w={31} $top={1}><ArrowIcon c="#8a8a8a" edge="#6c6c6c" flip /></Slot>
        <Slot $w={10}><ToolSep /></Slot>
        <Slot $w={35} $top={2}>
          <svg width="21" height="17" viewBox="0 0 21 17"><path d="M.5 4H8L10 6H20.500V16.500H.5Z" fill="#efcb70" stroke="#c29c42" /><path d="M3 11Q8 10 9 4H6L12 .5L17 4.500H13Q12 12 5 13Z" fill="#57bd35" stroke="#33861e" strokeWidth=".7" /></svg>
        </Slot>
        <ToolActive><ConsolePanel left /></ToolActive>
        <Slot $w={6}><ToolSep /></Slot>
        <Slot $w={37}>
          <svg width="18" height="17" viewBox="0 0 18 17"><rect x="1.500" y="2" width="15" height="14" fill="#fff" stroke="#555" strokeWidth="2" /><rect x="5" y="0" width="8" height="4" fill="#555" /><path d="M5 7H13M5 9.500H13M5 12H13" stroke="#a5a5a5" /></svg>
        </Slot>
        <Slot $w={4}><ToolSep /></Slot>
        <Slot $w={41}><svg width="22" height="18" viewBox="0 0 22 18"><path d="M3 3Q11 7 19 15M19 2.500Q10 8 4 15.500" stroke="#c71a18" strokeWidth="5" strokeLinecap="round" /><path d="M3 3Q11 7 19 15M19 2.500Q10 8 4 15.500" stroke="#ea3a31" strokeWidth="3.200" strokeLinecap="round" fill="none" /></svg></Slot>
        <Slot $w={23}>
          <svg width="21" height="17" viewBox="0 0 21 17"><rect x=".5" y=".5" width="20" height="16" rx="1" fill="#e9edf1" stroke="#8793a0" /><rect x="3" y="4.500" width="15" height="9" fill="#fff" stroke="#a9b4be" /><path d="M1 2H20" stroke="#a8b5c2" strokeWidth="2" /><path d="M5 7.500H7M9 7.500H16M5 10.500H7M9 10.500H16" stroke="#8793a0" /></svg>
        </Slot>
        <Slot $w={41} $top={1}>
          <svg width="18" height="18" viewBox="0 0 18 18"><path d="M.5 .5H13L17.500 4.500V17.500H.5Z" fill="#fafafa" stroke="#a0a0a0" /><path d="M12 13Q7 15 5 11Q4 6.500 8.500 5.500Q13 5 13.500 9.500" fill="none" stroke="#3fae36" strokeWidth="2.400" /><path d="M10 9H17L13.500 13Z" fill="#3fae36" /></svg>
        </Slot>
        <Slot $w={2}><ToolSep /></Slot>
        <Slot $w={41}>
          <svg width="19" height="18" viewBox="0 0 19 18"><rect width="19" height="18" fill="#2f4dad" /><path d="M3 0V18" stroke="#7d93d8" strokeWidth="1.500" /><text x="11" y="14.500" textAnchor="middle" fontSize="16" fontFamily="Liberation Serif" fontWeight="700" fill="#fff">?</text></svg>
        </Slot>
        <Slot $w={24} $top={2}><ConsolePanel play /></Slot>
      </MmcTools>
      <Snapin />
      <StatusBar><StatusCell $w={184} /><StatusCell $w={118} /><StatusCell $w={3} /></StatusBar>
      <GuestTaskbar />
      <GhostMenu><Fit w={154} size={12} color="#ebe9ec">Recorte de pantalla completa</Fit></GhostMenu>
      <Pointer>
        <svg width="17" height="24" viewBox="0 0 17 24"><path d="M1 1V20L5.500 16.500L8.500 22.500Q11.500 23 12 21L9.500 15.500L15.500 15Z" fill="#fff" stroke="#25252c" strokeWidth="1.200" /></svg>
      </Pointer>
    </VmWindow>
  );
}

/* ---------- host taskbar ---------- */
const HostBar = styled.footer`
  height: 40px; flex: none; background: linear-gradient(90deg, #282a2b, #303436 40%, #2b2d2e 60%, #2f3133); display: flex; align-items: stretch;
`;
const HostApp = styled.div`
  width: ${(p) => p.$w}px; flex: none; margin-right: ${(p) => p.$gap || 0}px; display: flex; align-items: center;
  justify-content: ${(p) => (p.$end ? 'flex-end' : 'center')}; padding-right: ${(p) => p.$pr || 0}px;
  background: ${(p) => (p.$on ? '#5b5d5f' : 'transparent')};
  border-bottom: 2px solid ${(p) => (p.$plain ? 'transparent' : '#76b9ed')};
`;
const MoreWindows = styled.div`width: 9px; flex: none; margin-right: 9px; border-bottom: 2px solid #4f86b3;`;

function HostTaskbar() {
  return (
    <HostBar>
      <HostApp $w={48} $plain><WinLogo w={17} h={17} /></HostApp>
      <HostApp $w={46} $gap={9} $plain>
        <svg width="17" height="16" viewBox="0 0 17 16" fill="none" stroke="#fff" strokeWidth="1.200"><path d="M1 4.500H11V11.500H1ZM1 0V2H11V0M1 16V14H11V16M15 0V16" /><path d="M15 4V7" strokeWidth="3" /></svg>
      </HostApp>
      <HostApp $w={40} $gap={9}><FolderApp w={22} h={19} /></HostApp>
      <HostApp $w={40} $gap={9}>
        <svg width="24" height="23" viewBox="0 0 24 23"><path d="M1 13V18Q4 20 12 17L20 12V8Z" fill="#a6a6a6" /><ellipse cx="12" cy="8" rx="11" ry="6.800" transform="rotate(-22 12 8)" fill="#f7f7f7" stroke="#dc3b38" strokeWidth="2" /><path d="M5 11L17 5M11 3L12 12" stroke="#888" /><g fill="none" stroke="#2c8fd3" strokeWidth="1.700"><circle cx="14" cy="19" r="2.500" /><circle cx="20" cy="18" r="2.500" /><path d="M15 16L21 10M18 16L13 11" /></g></svg>
      </HostApp>
      <HostApp $w={40} $gap={9}>
        <svg width="24" height="24" viewBox="0 0 24 24"><circle cx="12" cy="12" r="11" fill="#7b2d91" stroke="#e9ddef" strokeWidth="1.500" /><path d="M6 8Q5.500 5 6.500 5L9.500 6.500H14.500L17.500 5Q18.500 5 18 8Q19.500 11 18 14Q16 17.500 12 17.500T6 14Q4.500 11 6 8Z" fill="#fff" /><path d="M8 11Q12 10 16 11Q18 14 14.500 15.500H9.500Q6 14 8 11Z" fill="#eadff0" /></svg>
      </HostApp>
      <HostApp $w={31} $end><AcroLogo w={21} h={21} bg="#b30b00" /></HostApp>
      <MoreWindows />
      <HostApp $w={40} $gap={9}>
        <svg width="22" height="22" viewBox="0 0 22 22"><circle cx="11" cy="11" r="11" fill="#fbc116" /><path d="M11 11L1.500 5.500A11 11 0 0 1 20.500 5.500H11Z" fill="#e33b2e" /><path d="M11 11L1.500 5.500A11 11 0 0 0 10.500 22L15 13.500Z" fill="#2da94f" /><path d="M11 5.500H20.600A11 11 0 0 1 10.500 22L15.500 13Z" fill="#fbc116" /><circle cx="11" cy="11" r="5.500" fill="#fff" /><circle cx="11" cy="11" r="4.300" fill="#4285f4" /></svg>
      </HostApp>
      <HostApp $w={40} $gap={9} $pr={3}>
        <svg width="21" height="24" viewBox="0 0 21 24"><path d="M10.500 1L20 5L18 18L10.500 23L3 18L1 5Z" fill="#18375f" stroke="#d6e0eb" strokeWidth="1.300" /><path d="M1.500 5.500L10.500 10L19.500 5.500M10.500 10V22" stroke="#d6e0eb" strokeWidth="1.500" fill="none" /><path d="M5 5L10.500 2.800L16 5L10.500 7.800Z" fill="#0b2140" /></svg>
      </HostApp>
      <HostApp $w={40} $gap={5}>
        <svg width="20" height="23" viewBox="0 0 20 23"><path d="M2.500 16H17.500L20 23H0Z" fill="#f38a0c" /><path d="M8.500 0H11.500L16.500 18Q10 21 3.500 18Z" fill="#f58c14" /><path d="M7.300 4.500H12.700L13.800 8.500H6.200ZM5 12.500H15L16 16Q10 18.500 4 16Z" fill="#f1f1f1" /></svg>
      </HostApp>
      <HostApp $w={48} $on><Os2016 s={23} /></HostApp>
      <Grow />
      <Slot $w={24}><Chevron dir="up" c="#fff" s={12} w={1.300} /></Slot>
      <Slot $w={24}><svg width="12" height="16" viewBox="0 0 12 16" fill="none" stroke="#fff" strokeWidth="1.100"><rect x="1" y="4.500" width="7" height="7" rx="1" /><path d="M8 7L11 5V11L8 9M2 2.500Q6 -.5 10 2.500M2 13.500Q6 16.500 10 13.500" /></svg></Slot>
      <Slot $w={24}><svg width="17" height="10" viewBox="0 0 17 10"><path d="M3 10Q0 9 .5 6.500Q1 4.500 3.500 4.500Q5 0 9 .8Q11.500 1 12.500 4Q16 4 16.500 7Q16.500 10 14 10Z" fill="#f1f1f1" /><path d="M4 4.500Q7 4 9 6L13 4Q11 0 8 .8Q5 1 4 4.500" fill="#bdbdbd" /></svg></Slot>
      <Slot $w={25}><PlugBattery w={16} h={12} /></Slot>
      <Slot $w={24}><svg width="14" height="14" viewBox="0 0 14 14" fill="none" strokeWidth="1.200"><g stroke="#fff"><path d="M1 13Q1 1 13 1" stroke="#999" /><path d="M4 13Q4 4 13 4M7 13Q7 7.500 13 7.500M10 13Q10 10.500 13 10.500" /></g><rect x="11" y="11" width="2" height="2" fill="#fff" /></svg></Slot>
      <Slot $w={21}><svg width="17" height="14" viewBox="0 0 17 14" fill="none" stroke="#fff" strokeWidth="1.100"><path d="M1 5H3.500L7 1.500V12.500L3.500 9H1ZM9.500 5Q11 7 9.500 9" /><path d="M11.500 3Q14.500 7 11.500 11M13.500 1Q18 7 13.500 13" stroke="#999" /></svg></Slot>
      <Slot $w={2} />
      <Clock $w={70}><Fit w={27} size={11.800} lh={18} color="#fff">19:31</Fit><Fit w={59} size={11.800} lh={18} color="#fff">17/02/2021</Fit></Clock>
      <Slot $w={48} $top={5}><Notice n="20" light="#aaa" fs={15} s={.78} /></Slot>
      <ShowDesktop $w={5} />
    </HostBar>
  );
}

export default function App() {
  return (
    <Screen>
      <Global />
      <AcrobatWindow />
      <VirtualMachine />
      <HostTaskbar />
    </Screen>
  );
}
